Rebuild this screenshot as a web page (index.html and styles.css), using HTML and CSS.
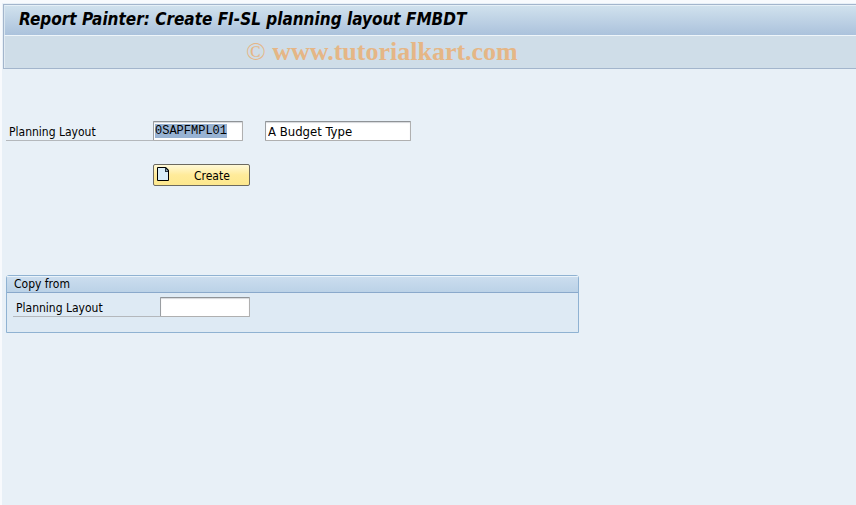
FILE: index.html
```html
<!DOCTYPE html>
<html lang="en">
<head>
    <meta charset="UTF-8">
    <title>Report Painter</title>
    <link rel="stylesheet" href="styles.css">
</head>
<body>
<div class="window">
    <header class="header">
        <h1 class="title">Report Painter: Create FI-SL planning layout FMBDT</h1>
        <div class="toolbar">
            <p class="watermark"><span class="copy">©</span> www.tutorialkart.com</p>
        </div>
    </header>

    <main>
        <form class="form">
            <div class="row">
                <label class="label" for="layout">Planning Layout</label>
                <input class="field code" id="layout" type="text" value="0SAPFMPL01">
                <input class="field description" type="text" value="A Budget Type" aria-label="Description">
            </div>
            <button class="create" type="button">
                <svg width="12" height="14" viewBox="0 0 12 14">
                    <path d="M1 1H8L11 4V13H1Z" fill="#d9eef9"/>
                    <path d="M8 0H9L12 3V5H8Z" fill="#26363f"/>
                    <path d="M9 2V4H11Z" fill="#8fa9b8"/>
                    <path d="M0.5 0.5H8.5L11.5 3.5V13.5H0.5Z" fill="none" stroke="#000"/>
                </svg>
                <span>Create</span>
            </button>

            <section class="group">
                <h2 class="group-title">Copy from</h2>
                <div class="row">
                    <label class="label" for="source">Planning Layout</label>
                    <input class="field code" id="source" type="text">
                </div>
            </section>
        </form>
    </main>
</div>

<script>
    const layout = document.getElementById('layout');
    layout.focus();
    layout.select();
</script>
</body>
</html>
```

FILE: styles.css
```css
* {
    box-sizing: border-box;
}
body {
    margin: 0;
    padding: 3px 0 0 2px;
    background-color: #f8fafd;
    color: #000;
    font-family: "DejaVu Sans Condensed", "DejaVu Sans", sans-serif;
    font-size: 12px;
}
.window {
    min-height: calc(100vh - 3px);
    padding: 1px 0 0 1px;
    background-color: #e8f0f7;
}

/* title and toolbar */
.header {
    border: 1px solid #a3b5cc;
    border-right: none;
}
.title {
    margin: 0;
    height: 30px;
    padding-left: 14px;
    border-top: 1px solid #e6f0f7;
    border-left: 1px solid #d9e6f0;
    background: linear-gradient(#d0e1ed, #abc2dc);
    font-size: 17px;
    font-style: italic;
    line-height: 26px;
}
.toolbar {
    height: 33px;
    padding-left: 241px;
    border-top: 1px solid #eef5fa;
    border-left: 1px solid #e2ebf2;
    background-color: #cfdde8;
}
.watermark {
    margin: 0;
    color: #e5b686;
    font-family: "Liberation Serif", serif;
    font-size: 26px;
    font-weight: bold;
    line-height: 32px;
}
.copy {
    font-weight: normal;
}

/* form */
.form {
    padding: 52px 3px 0;
}
.row {
    display: flex;
    height: 20px;
}
.label {
    width: 147px;
    padding-left: 3px;
    border-bottom: 1px solid #b4b8bc;
    line-height: 22px;
}
.field {
    width: 146px;
    height: 20px;
    margin: 0;
    padding: 1px 2px 0;
    border: 1px solid #b0b0b0;
    border-top-color: #8f9397;
    border-left-color: #9a9ea2;
    border-radius: 1px;
    outline: none;
    background-color: #fff;
    box-shadow: inset 0 1px 1px #d5d8db;
    color: #000;
    font: inherit;
}
.code {
    width: 90px;
    padding: 0 1px;
    font-family: "Liberation Mono", monospace;
    line-height: 16px;
}
.code::selection {
    background-color: #98b3d3;
    color: #000;
}
.description {
    margin-left: 22px;
    font-size: 13px;
}
.create {
    display: flex;
    align-items: center;
    width: 97px;
    height: 22px;
    margin: 23px 0 0 147px;
    padding: 0 3px;
    border: 1px solid #6c6a60;
    border-radius: 2px;
    background: linear-gradient(#fff9d8, #ffeb9a 50%, #fde88e);
    color: #000;
    font: inherit;
    line-height: 16px;
}
.create svg {
    margin-bottom: 2px;
}
.create span {
    margin-left: 25px;
    padding-top: 2px;
}

/* copy from */
.group {
    max-width: 573px;
    margin-top: 89px;
    padding-bottom: 15px;
    border: 1px solid #8fb2d2;
    border-radius: 3px 3px 0 0;
    background-color: #deeaf4;
}
.group-title {
    margin: 0 0 4px;
    height: 17px;
    padding-left: 7px;
    border-top: 1px solid #eaf3fa;
    border-bottom: 1px solid #8aa9cb;
    background: linear-gradient(#cbddee, #bbd2e7);
    font-size: 12px;
    font-weight: normal;
    line-height: 15px;
}
.group .row {
    padding-left: 6px;
}
```
